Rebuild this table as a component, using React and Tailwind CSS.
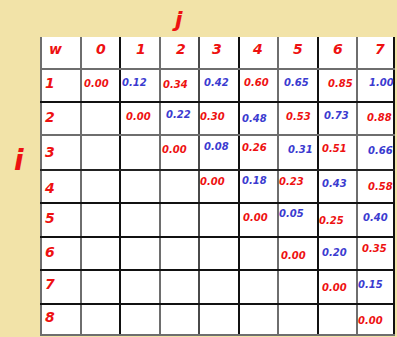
import React from 'react'

// column widths + left line colour (x = 40, 80, 119, 159, 198, 238, 277, 317, 356)
const cols = [
  'w-[40px] border-l-[#6e6e6e]',
  'w-[39px] border-l-[#6e6e6e]',
  'w-[40px] border-l-[#111111]',
  'w-[39px] border-l-[#6e6e6e]',
  'w-[40px] border-l-[#4a4a4a]',
  'w-[39px] border-l-[#111111]',
  'w-[40px] border-l-[#6e6e6e]',
  'w-[39px] border-l-[#111111]',
  'w-[39px] border-l-[#6e6e6e] border-r-2 border-r-[#111111]',
]

// row heights + top line colour
const rowStyles = [
  'h-[31px]',
  'h-[33px] border-t-2 border-t-[#6e6e6e]',
  'h-[33px] border-t-2 border-t-[#111111]',
  'h-[35px] border-t-2 border-t-[#6e6e6e]',
  'h-[33px] border-t-2 border-t-[#222222]',
  'h-[34px] border-t-2 border-t-[#111111]',
  'h-[33px] border-t-2 border-t-[#111111]',
  'h-[34px] border-t-2 border-t-[#111111]',
  'h-[33px] border-t-2 border-t-[#111111] border-b-2 border-b-[#6e6e6e]',
]

const header = [
  ['w', 'pl-[7px]'],
  ['0', 'pl-[14px]'],
  ['1', 'pl-[15px]'],
  ['2', 'pl-[15px]'],
  ['3', 'pl-[12px]'],
  ['4', 'pl-[13px]'],
  ['5', 'pl-[14px]'],
  ['6', 'pl-[14px]'],
  ['7', 'pl-[17px]'],
]

// [label, label offset, cells...] cell = [value, offset classes] or null
const rows = [
  ['1', 'pt-[6px]', [
    ['0.00', 'pl-[2px] pt-[9px]'], ['0.12', 'pl-[1px] pt-[8px]'], ['0.34', 'pl-[2px] pt-[10px]'], ['0.42', 'pl-[4px] pt-[8px]'],
    ['0.60', 'pl-[4px] pt-[8px]'], ['0.65', 'pl-[5px] pt-[8px]'], ['0.85', 'pl-[9px] pt-[9px]'], ['1.00', 'pl-[11px] pt-[8px]'],
  ]],
  ['2', 'pt-[7px]', [
    null, ['0.00', 'pl-[5px] pt-[9px]'], ['0.22', 'pl-[5px] pt-[7px]'], ['0.30', 'pl-0 pt-[9px]'],
    ['0.48', 'pl-[2px] pt-[11px]'], ['0.53', 'pl-[7px] pt-[9px]'], ['0.73', 'pl-[5px] pt-[8px]'], ['0.88', 'pl-[9px] pt-[10px]'],
  ]],
  ['3', 'pt-[9px]', [
    null, null, ['0.00', 'pl-[1px] pt-[9px]'], ['0.08', 'pl-[4px] pt-[6px]'],
    ['0.26', 'pl-[2px] pt-[7px]'], ['0.31', 'pl-[9px] pt-[9px]'], ['0.51', 'pl-[3px] pt-[8px]'], ['0.66', 'pl-[10px] pt-[10px]'],
  ]],
  ['4', 'pt-[10px]', [
    null, null, null, ['0.00', 'pl-0 pt-[6px]'],
    ['0.18', 'pl-[2px] pt-[5px]'], ['0.23', 'pl-0 pt-[6px]'], ['0.43', 'pl-[3px] pt-[8px]'], ['0.58', 'pl-[10px] pt-[11px]'],
  ]],
  ['5', 'pt-[7px]', [
    null, null, null, null,
    ['0.00', 'pl-[3px] pt-[9px]'], ['0.05', 'pl-0 pt-[5px]'], ['0.25', 'pl-0 pt-[12px]'], ['0.40', 'pl-[5px] pt-[9px]'],
  ]],
  ['6', 'pt-[7px]', [
    null, null, null, null,
    null, ['0.00', 'pl-[2px] pt-[13px]'], ['0.20', 'pl-[3px] pt-[10px]'], ['0.35', 'pl-[4px] pt-[6px]'],
  ]],
  ['7', 'pt-[6px]', [
    null, null, null, null,
    null, null, ['0.00', 'pl-[3px] pt-[12px]'], ['0.15', 'pl-0 pt-[9px]'],
  ]],
  ['8', 'pt-[5px]', [
    null, null, null, null,
    null, null, null, ['0.00', 'pl-0 pt-[11px]'],
  ]],
]

const font = "font-['DejaVu_Sans',Verdana,sans-serif] font-bold italic"

export default function App() {
  return (
    <div className={`w-[397px] h-[337px] overflow-hidden bg-[#f2e3a8] flex flex-col ${font}`}>
      {/* top margin with j */}
      <div className="h-[37px] shrink-0 pl-[175px] pt-[9px]">
        <span className="block text-[22px] leading-none text-[#ee1111]">j</span>
      </div>

      <div className="flex">
        {/* left margin with i */}
        <div className="w-[40px] shrink-0 pl-[14px] pt-[110px]">
          <span className="block text-[28px] leading-none text-[#ee1111]">i</span>
        </div>

        {/* table */}
        <div className="flex flex-col bg-white">
          <div className={`flex ${rowStyles[0]}`}>
            {header.map(([t, pad], c) => (
              <div key={c} className={`border-l-2 ${cols[c]} ${pad} pt-[5px]`}>
                <span className="block text-[14px] leading-none text-[#ee1111]">{t}</span>
              </div>
            ))}
          </div>

          {rows.map(([label, labelPad, cells], r) => (
            <div key={label} className={`flex ${rowStyles[r + 1]}`}>
              <div className={`border-l-2 ${cols[0]} pl-[3px] ${labelPad}`}>
                <span className="block text-[14px] leading-none text-[#ee1111]">{label}</span>
              </div>
              {cells.map((cell, c) => {
                const filled = cells.filter((x, k) => x && k < c).length
                return (
                  <div key={c} className={`border-l-2 ${cols[c + 1]} ${cell ? cell[1] : ''}`}>
                    {cell && (
                      <span
                        className={`block text-[10px] leading-none whitespace-nowrap ${
                          filled % 2 === 0 ? 'text-[#ee1111]' : 'text-[#3b3bd0]'
                        }`}
                      >
                        {cell[0]}
                      </span>
                    )}
                  </div>
                )
              })}
            </div>
          ))}
        </div>
      </div>
    </div>
  )
}
